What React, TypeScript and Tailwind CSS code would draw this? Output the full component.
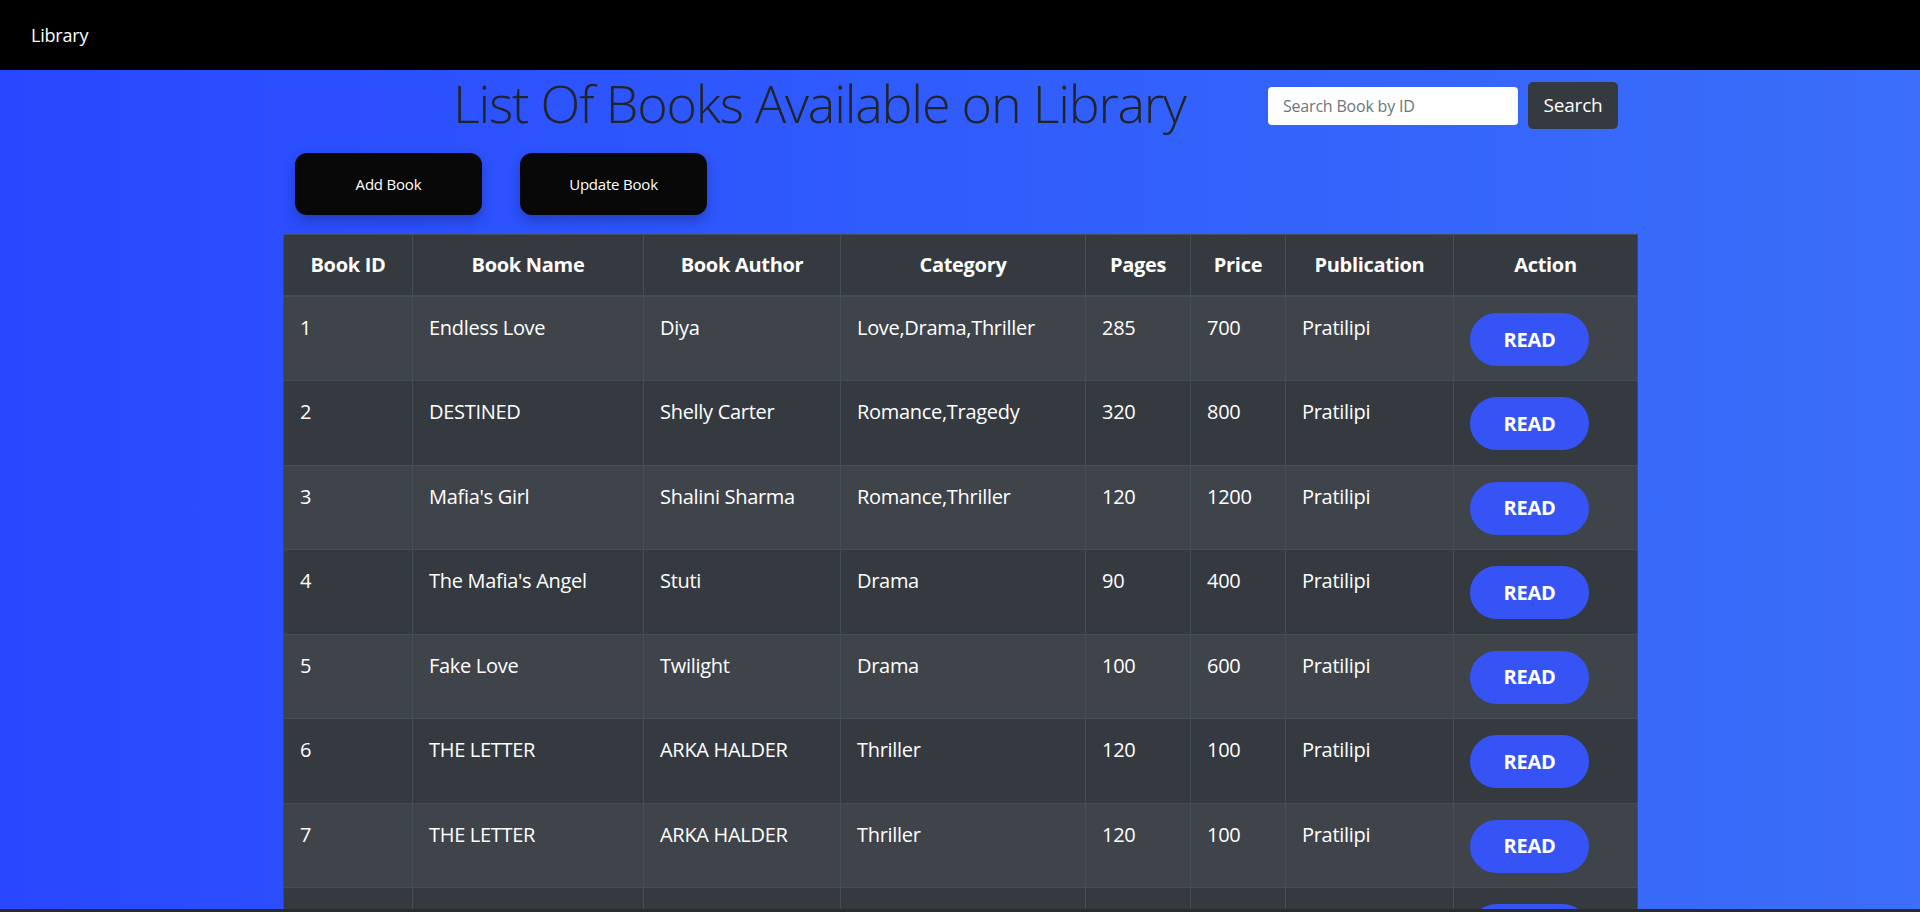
import React from "react";

type Book = {
  id: string;
  name: string;
  author: string;
  category: string;
  pages: string;
  price: string;
  publication: string;
};

const books: Book[] = [
  { id: "1", name: "Endless Love", author: "Diya", category: "Love,Drama,Thriller", pages: "285", price: "700", publication: "Pratilipi" },
  { id: "2", name: "DESTINED", author: "Shelly Carter", category: "Romance,Tragedy", pages: "320", price: "800", publication: "Pratilipi" },
  { id: "3", name: "Mafia's Girl", author: "Shalini Sharma", category: "Romance,Thriller", pages: "120", price: "1200", publication: "Pratilipi" },
  { id: "4", name: "The Mafia's Angel", author: "Stuti", category: "Drama", pages: "90", price: "400", publication: "Pratilipi" },
  { id: "5", name: "Fake Love", author: "Twilight", category: "Drama", pages: "100", price: "600", publication: "Pratilipi" },
  { id: "6", name: "THE LETTER", author: "ARKA HALDER", category: "Thriller", pages: "120", price: "100", publication: "Pratilipi" },
  { id: "7", name: "THE LETTER", author: "ARKA HALDER", category: "Thriller", pages: "120", price: "100", publication: "Pratilipi" },
  { id: "8", name: "Broken Hearts", author: "Diya", category: "Romance", pages: "150", price: "300", publication: "Pratilipi" },
];

const headers = ["Book ID", "Book Name", "Book Author", "Category", "Pages", "Price", "Publication", "Action"];
const widths = ["w-[129px]", "w-[231px]", "w-[197px]", "w-[245px]", "w-[105px]", "w-[95px]", "w-[168px]", "w-[184px]"];

export default function App() {
  return (
    <div className="h-[912px] flex flex-col overflow-hidden font-['Open_Sans','Noto_Sans',sans-serif]">
      <nav className="h-[70px] shrink-0 bg-black flex items-center px-[31px]">
        <span className="text-white text-[18px] leading-[30px] tracking-[-0.2px]">Library</span>
      </nav>
      <main className="flex-1 min-h-0 overflow-hidden bg-linear-to-r from-[#2947ff] to-[#3b6ef9]">
        <div className="mx-auto w-[1354px]">
          <div className="flex items-start h-[83px]">
            <div className="w-[985px] shrink-0 pl-[170px]">
              <h1 className="text-[52px] leading-[66px] tracking-[-1.2px] font-light text-[#212529] whitespace-nowrap">
                List Of Books Available on Library
              </h1>
            </div>
            <form className="flex items-center gap-[10px] mt-[12px]" onSubmit={(e) => e.preventDefault()}>
              <input
                type="text"
                placeholder="Search Book by ID"
                className="w-[250px] h-[38px] rounded-[4px] bg-white px-[15px] text-[16px] tracking-[-0.2px] text-[#495057] placeholder:text-[#6c757d] outline-none"
              />
              <button type="submit" className="w-[90px] h-[47px] rounded-[5px] bg-[#343a40] text-white text-[19px] tracking-[-0.2px]">
                Search
              </button>
            </form>
          </div>
          <div className="flex items-center gap-[38px] pl-[12px] h-[62px]">
            <button className="w-[187px] h-[62px] rounded-[12px] bg-[#080808] text-white text-[15px] tracking-[-0.2px] shadow-[0_6px_12px_rgba(20,25,90,0.35)]">
              Add Book
            </button>
            <button className="w-[187px] h-[62px] rounded-[12px] bg-[#080808] text-white text-[15px] tracking-[-0.2px] shadow-[0_6px_12px_rgba(20,25,90,0.35)]">
              Update Book
            </button>
          </div>
          <table className="mt-[19px] w-[1354px] table-fixed border-collapse text-white text-[20px] leading-[30px] tracking-[-0.3px]">
            <colgroup>
              {widths.map((w, i) => (
                <col key={i} className={w} />
              ))}
            </colgroup>
            <thead>
              <tr className="bg-[#343a40] h-[61px]">
                {headers.map((h) => (
                  <th key={h} className="border border-[#454d55] border-b-2 px-[15px] py-[15px] font-bold text-center align-middle">
                    {h}
                  </th>
                ))}
              </tr>
            </thead>
            <tbody>
              {books.map((b, i) => (
                <tr key={b.id} className={`h-[84.5px] ${i % 2 === 0 ? "bg-[#3f444b]" : "bg-[#343a40]"}`}>
                  <td className="border border-[#454d55] px-[16px] pt-[16px] align-top">{b.id}</td>
                  <td className="border border-[#454d55] px-[16px] pt-[16px] align-top">{b.name}</td>
                  <td className="border border-[#454d55] px-[16px] pt-[16px] align-top">{b.author}</td>
                  <td className="border border-[#454d55] px-[16px] pt-[16px] align-top">{b.category}</td>
                  <td className="border border-[#454d55] px-[16px] pt-[16px] align-top">{b.pages}</td>
                  <td className="border border-[#454d55] px-[16px] pt-[16px] align-top">{b.price}</td>
                  <td className="border border-[#454d55] px-[16px] pt-[16px] align-top">{b.publication}</td>
                  <td className="border border-[#454d55] px-[16px] pt-[16px] align-top">
                    <button className="w-[119px] h-[53px] rounded-full bg-[#3654f6] text-white font-bold text-[20px] tracking-[-0.3px]">
                      READ
                    </button>
                  </td>
                </tr>
              ))}
            </tbody>
          </table>
        </div>
      </main>
      <div className="h-[3px] shrink-0 bg-[#2b2b2b]" />
    </div>
  );
}
